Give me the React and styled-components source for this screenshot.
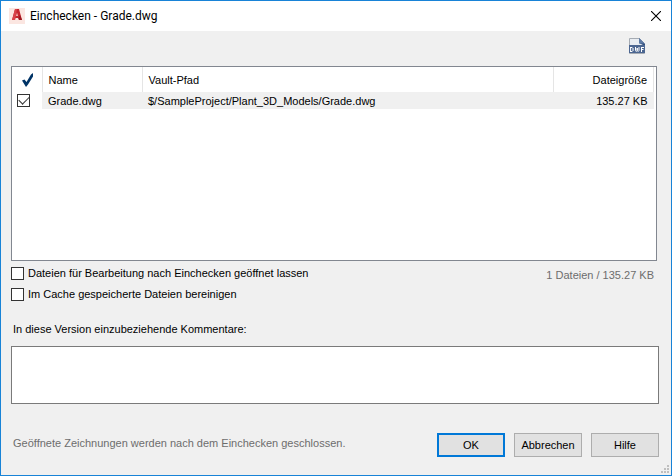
import { useState } from 'react';
import styled, { createGlobalStyle } from 'styled-components';

const files = [
	{
		name: 'Grade.dwg',
		path: '$/SampleProject/Plant_3D_Models/Grade.dwg',
		size: '135.27 KB',
	},
];

const AppIcon = () => (
	<svg width='16' height='16' viewBox='0 0 16 16' aria-hidden='true'>
		<rect width='16' height='16' fill='#fbe6e1' />
		<path d='M3 12 6 1h4l3 11h-3l-.7-2H6.4L6 12z' fill='#c4262e' />
		<path d='M7 8 8 4.6 9 8z' fill='#f3c3bd' />
		<path d='M3 12 6 1h2L6.4 10 6 12z' fill='#d9434a' />
		<path d='M10 12 9.3 10 11 7l2 5z' fill='#9c1a22' />
	</svg>
);

const CloseIcon = () => (
	<svg width='10' height='10' viewBox='0 0 10 10' aria-hidden='true'>
		<path d='M0 0 10 10M10 0 0 10' stroke='#000' strokeWidth='1.1' />
	</svg>
);

const DwfIcon = () => (
	<svg width='16' height='16' viewBox='0 0 16 16' aria-hidden='true'>
		<path d='M.5 15.5V.5H10L15.5 6v9.5z' fill='#e9edf2' stroke='#a5abb3' />
		<path d='M10 0 16 6v2L10 5z' fill='#33517f' />
		<path d='M10 0v5.5h5.5z' fill='#5e7ba5' />
		<rect y='7' width='16' height='8' fill='#4c6691' />
		<path
			d='M1.6 9v5M1 9.5h2.4M1 13.5h2.4M4 10v3M6.5 9v3.5l.8 1 .9-1V10v2.5l.9 1 .9-1V9M12.5 9v5M12 9.5h3M12 11.5h2.5'
			fill='none'
			stroke='#fff'
		/>
	</svg>
);

const HeaderCheck = () => (
	<svg width='12' height='14' viewBox='0 0 12 14' role='img' aria-label='Einchecken'>
		<path d='M0 7.5 2.5 6.5 4.5 9 9 1.5 11 0v3.5L6 11.5 4 14z' fill='#003366' />
	</svg>
);

const GripIcon = () => (
	<svg width='8' height='8' viewBox='0 0 8 8' aria-hidden='true'>
		<path
			d='M6 0h2v2H6zM3 3h2v2H3zM6 3h2v2H6zM0 6h2v2H0zM3 6h2v2H3zM6 6h2v2H6z'
			fill='#bfbfbf'
		/>
	</svg>
);

const App = () => {
	const [selected, setSelected] = useState(true);
	const [keepOpen, setKeepOpen] = useState(false);
	const [purge, setPurge] = useState(false);
	const [comment, setComment] = useState('');

	return (
		<>
			<GlobalStyle />
			<Dialog>
				<TitleBar>
					<AppIcon />
					<Title>Einchecken - Grade.dwg</Title>
					<CloseButton aria-label='Schließen'>
						<CloseIcon />
					</CloseButton>
				</TitleBar>

				<Content>
					<Toolbar>
						<ToolButton aria-label='DWF'>
							<DwfIcon />
						</ToolButton>
					</Toolbar>

					<FileList>
						<FileTable>
							<colgroup>
								<Col $width='30px' />
								<Col $width='100px' />
								<Col />
								<Col $width='100px' />
							</colgroup>
							<thead>
								<tr>
									<HeadCell $center>
										<HeaderCheck />
									</HeadCell>
									<HeadCell>Name</HeadCell>
									<HeadCell>Vault-Pfad</HeadCell>
									<HeadCell $right>Dateigröße</HeadCell>
								</tr>
							</thead>
							<tbody>
								{files.map((file) => (
									<tr key={file.name}>
										<CheckCell>
											<CheckBox
												type='checkbox'
												aria-label={file.name}
												checked={selected}
												onChange={(e) => setSelected(e.target.checked)}
											/>
										</CheckCell>
										<Cell>{file.name}</Cell>
										<Cell>{file.path}</Cell>
										<Cell $right>{file.size}</Cell>
									</tr>
								))}
							</tbody>
						</FileTable>
					</FileList>

					<OptionsRow>
						<Options>
							<Option>
								<CheckBox
									type='checkbox'
									checked={keepOpen}
									onChange={(e) => setKeepOpen(e.target.checked)}
								/>
								Dateien für Bearbeitung nach Einchecken geöffnet lassen
							</Option>
							<Option>
								<CheckBox
									type='checkbox'
									checked={purge}
									onChange={(e) => setPurge(e.target.checked)}
								/>
								Im Cache gespeicherte Dateien bereinigen
							</Option>
						</Options>
						<Summary>1 Dateien / 135.27 KB</Summary>
					</OptionsRow>

					<CommentLabel htmlFor='comment'>
						In diese Version einzubeziehende Kommentare:
					</CommentLabel>
					<Comment
						id='comment'
						value={comment}
						onChange={(e) => setComment(e.target.value)}
					/>

					<Footer>
						<Note>Geöffnete Zeichnungen werden nach dem Einchecken geschlossen.</Note>
						<Button $primary>OK</Button>
						<Button>Abbrechen</Button>
						<Button>Hilfe</Button>
					</Footer>
				</Content>

				<Grip>
					<GripIcon />
				</Grip>
			</Dialog>
		</>
	);
};

export default App;

const GlobalStyle = createGlobalStyle`
	* {
		box-sizing: border-box;
	}
	body {
		margin: 0;
	}
	body, button, textarea {
		font-family: 'Liberation Sans', Arial, sans-serif;
		font-size: 11px;
		line-height: 16px;
		color: #000;
	}
	svg {
		display: block;
	}
`;

const Dialog = styled.main`
	position: relative;
	display: flex;
	flex-direction: column;
	min-height: 100vh;
	border: 1px solid #1883d7;
	background: #f0f0f0;
`;
const TitleBar = styled.header`
	display: flex;
	align-items: center;
	height: 30px;
	padding-left: 8px;
	background: white;
`;
const Title = styled.h1`
	flex: 1;
	margin: 0 0 0 5px;
	font-family: Roboto, 'Open Sans', sans-serif;
	font-size: 12px;
	font-weight: 400;
`;
const CloseButton = styled.button`
	display: flex;
	align-items: center;
	justify-content: center;
	width: 30px;
	height: 30px;
	padding: 0;
	border: none;
	background: none;
`;
const Content = styled.div`
	display: flex;
	flex: 1;
	flex-direction: column;
	padding: 0 12px 18px 10px;
`;
const Toolbar = styled.div`
	display: flex;
	align-items: center;
	justify-content: flex-end;
	height: 35px;
	padding: 0 14px 6px 0;
`;
const ToolButton = styled.button`
	padding: 0;
	border: none;
	background: none;
`;
const FileList = styled.div`
	flex: 1;
	min-height: 100px;
	margin-right: 2px;
	padding-right: 2px;
	border: 1px solid #828790;
	background: white;
`;
const FileTable = styled.table`
	width: 100%;
	table-layout: fixed;
	border-collapse: collapse;
`;
const Col = styled.col`
	width: ${(props) => props.$width || 'auto'};
`;
const HeadCell = styled.th`
	height: 25px;
	padding: ${(props) => (props.$center ? '0 0 0 10px' : '0 6px')};
	border-right: 1px solid #e5e5e5;
	font-weight: 400;
	text-align: ${(props) => (props.$right ? 'right' : 'left')};
`;
const Cell = styled.td`
	height: 17px;
	padding: 0 6px;
	background: #f0f0f0;
	text-align: ${(props) => (props.$right ? 'right' : 'left')};
`;
const CheckCell = styled.td`
	height: 17px;
	padding: 0 0 0 5px;
`;
const CheckBox = styled.input`
	appearance: none;
	display: block;
	flex: none;
	width: 13px;
	height: 13px;
	margin: 0;
	border: 1px solid #333;
	background: white;

	&:checked::before {
		content: '';
		display: block;
		width: 9px;
		height: 5px;
		margin: 2px 0 0 1px;
		border: solid #333;
		border-width: 0 0 1px 1px;
		transform: translateY(-1px) rotate(-45deg);
	}
`;
const OptionsRow = styled.div`
	display: flex;
	justify-content: space-between;
	padding-top: 4px;
`;
const Options = styled.div`
	display: flex;
	flex-direction: column;
	gap: 5px;
`;
const Option = styled.label`
	display: flex;
	align-items: center;
	gap: 4px;
`;
const Summary = styled.span`
	padding: 2px 5px 0 0;
	color: #6d6d6d;
`;
const CommentLabel = styled.label`
	margin: 19px 0 9px 2px;
`;
const Comment = styled.textarea`
	height: 58px;
	padding: 4px;
	border: 1px solid #7a7a7a;
	background: white;
	resize: none;
`;
const Footer = styled.footer`
	display: flex;
	align-items: center;
	gap: 9px;
	margin-top: 29px;
`;
const Note = styled.span`
	flex: 1;
	padding: 0 0 4px 2px;
	color: #6d6d6d;
`;
const Button = styled.button`
	width: 68px;
	height: 24px;
	padding: 0;
	border: ${(props) => (props.$primary ? '2px solid #0078d7' : '1px solid #adadad')};
	background: #e1e1e1;
`;
const Grip = styled.div`
	position: absolute;
	right: 2px;
	bottom: 2px;
`;
